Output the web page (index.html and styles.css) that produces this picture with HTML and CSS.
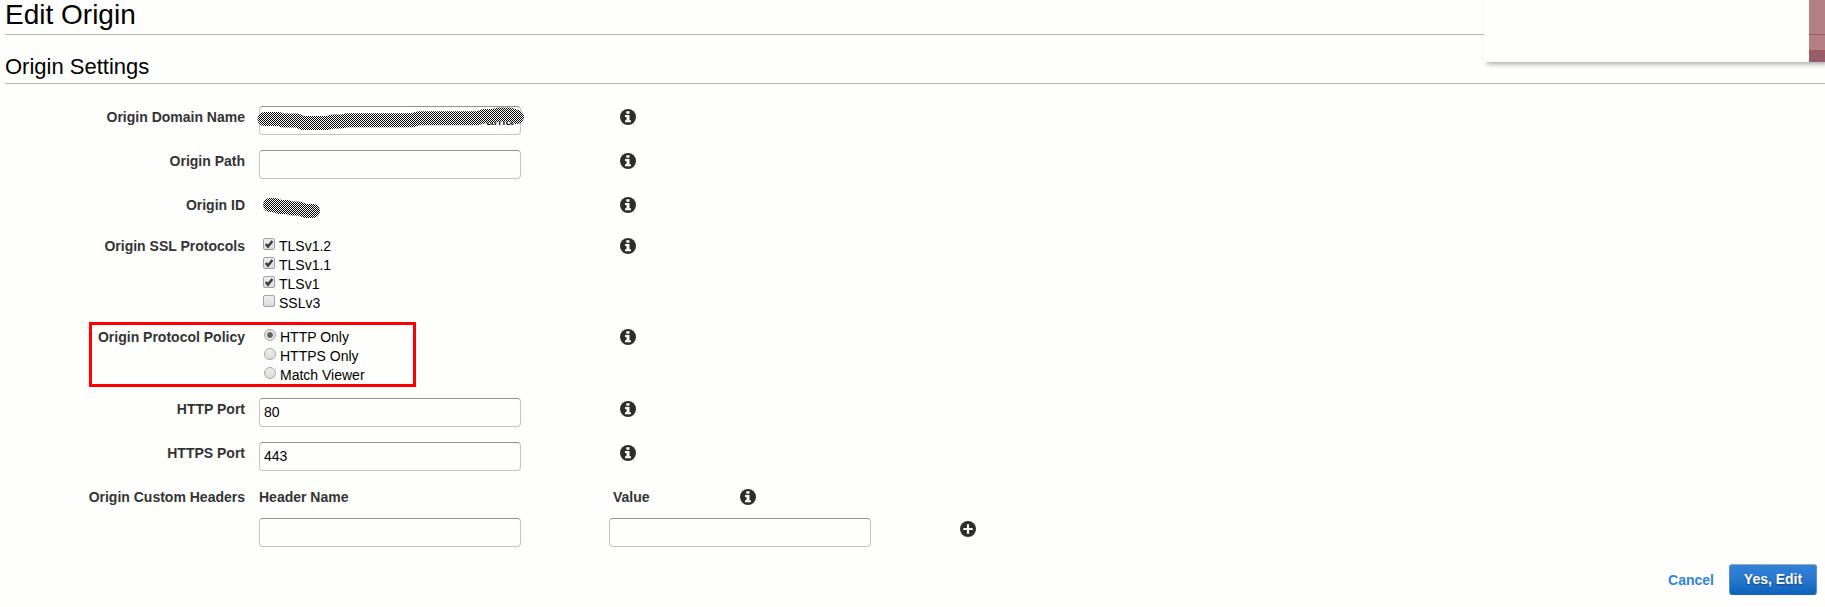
FILE: index.html
```
<!DOCTYPE html>
<html lang="en">
<head>
<meta charset="utf-8">
<title>Edit Origin</title>
<link rel="stylesheet" href="styles.css">
</head>
<body>
<svg class="defs" width="0" height="0" aria-hidden="true">
  <defs>
    <pattern id="hatch" width="2" height="2" patternUnits="userSpaceOnUse">
      <rect width="2" height="2" fill="#fefefd"/>
      <rect width="1" height="1" fill="#000"/>
      <rect x="1" y="1" width="1" height="1" fill="#000"/>
    </pattern>
    <symbol id="info" viewBox="0 0 16 16">
      <circle cx="8" cy="8" r="8" fill="#2d2d2d"/>
      <path d="M6.3 2.3h3.2v2.4H6.3zM5 6h4.5v5.3h1.4v2H5v-2h1.5V8H5z" fill="#fefefd"/>
    </symbol>
    <symbol id="plus" viewBox="0 0 16 16">
      <circle cx="8" cy="8" r="8" fill="#2d2d2d"/>
      <path d="M6.9 3.3h2.2v3.6h3.6v2.2H9.1v3.6H6.9V9.1H3.3V6.9h3.6z" fill="#fefefd"/>
    </symbol>
  </defs>
</svg>
<main class="page">
  <h1 class="title">Edit Origin</h1>
  <h2 class="subtitle">Origin Settings</h2>
  <form class="form">
    <div class="row">
      <span class="label">Origin Domain Name</span>
      <div class="field"><div class="input domain">ama</div>
        <svg class="scribble wide" width="270" height="26"><path d="M7.500 12H22L26 13.500H40L46 16H70L76 14.500H84L90 13.300H155L162 11.300H220L228 9H236L242 7.500H252L260 10"/></svg>
      </div>
      <svg class="icon"><use href="#info"/></svg>
    </div>
    <div class="row">
      <span class="label">Origin Path</span>
      <div class="field"><div class="input"></div></div>
      <svg class="icon"><use href="#info"/></svg>
    </div>
    <div class="row short">
      <span class="label">Origin ID</span>
      <div class="field">
        <svg class="scribble small" width="60" height="26"><path d="M8 8H12L18 10H25L30 11.500H37L44 14H51"/></svg>
      </div>
      <svg class="icon"><use href="#info"/></svg>
    </div>
    <div class="row protocols">
      <span class="label">Origin SSL Protocols</span>
      <div class="field options">
        <div class="option"><span class="box"><svg class="tick" viewBox="0 0 12 12"><path d="M2.800 6L5 8.500L9.400 3"/></svg></span>TLSv1.2</div>
        <div class="option"><span class="box"><svg class="tick" viewBox="0 0 12 12"><path d="M2.800 6L5 8.500L9.400 3"/></svg></span>TLSv1.1</div>
        <div class="option"><span class="box"><svg class="tick" viewBox="0 0 12 12"><path d="M2.800 6L5 8.500L9.400 3"/></svg></span>TLSv1</div>
        <div class="option"><span class="box"></span>SSLv3</div>
      </div>
      <svg class="icon"><use href="#info"/></svg>
    </div>
    <div class="row policy">
      <span class="label">Origin Protocol Policy</span>
      <div class="field options">
        <div class="option"><span class="radio on"></span>HTTP Only</div>
        <div class="option"><span class="radio"></span>HTTPS Only</div>
        <div class="option"><span class="radio"></span>Match Viewer</div>
      </div>
      <svg class="icon"><use href="#info"/></svg>
      <div class="highlight"></div>
    </div>
    <div class="row">
      <span class="label">HTTP Port</span>
      <div class="field"><div class="input">80</div></div>
      <svg class="icon"><use href="#info"/></svg>
    </div>
    <div class="row">
      <span class="label">HTTPS Port</span>
      <div class="field"><div class="input">443</div></div>
      <svg class="icon"><use href="#info"/></svg>
    </div>
    <div class="row headers">
      <span class="label">Origin Custom Headers</span>
      <span class="head">Header Name</span>
      <span class="head value">Value</span>
      <svg class="icon"><use href="#info"/></svg>
    </div>
    <div class="row pair">
      <div class="input"></div>
      <div class="input"></div>
      <svg class="icon"><use href="#plus"/></svg>
    </div>
  </form>
  <footer class="actions">
    <a class="cancel">Cancel</a>
    <button class="submit" type="button">Yes, Edit</button>
  </footer>
</main>
<div class="popup"><div class="strip"></div></div>
</body>
</html>
```
FILE: styles.css
```
* { box-sizing: border-box; }
body {
  margin: 0;
  background: #fefefd;
  color: #000;
  font: 14px/19px "Liberation Sans", Arial, sans-serif;
  overflow: hidden;
}
.defs { position: absolute; }
.page { height: 607px; padding-left: 5px; }
.title, .subtitle {
  margin: 0;
  border-bottom: 1px solid #b5b5b5;
  font-weight: normal;
}
.title { height: 35px; font-size: 28px; line-height: 30px; }
.subtitle { height: 49px; padding-top: 18px; font-size: 22px; line-height: 28px; }
.form { padding-top: 22px; }
.row { display: flex; height: 44px; position: relative; }
.short { height: 41px; }
.protocols { height: 91px; }
.policy { height: 72px; }
.headers { height: 32px; }
.label {
  width: 240px;
  margin-right: 14px;
  padding-top: 2px;
  text-align: right;
  font-weight: bold;
  color: #333;
}
.field { width: 361px; position: relative; }
.input {
  width: 262px;
  height: 29px;
  padding: 4px 4px 0;
  border: 1px solid #c4c4c4;
  border-top-color: #929292;
  border-radius: 4px;
}
.domain { padding-left: 226px; }
.icon { width: 16px; height: 16px; margin-top: 3px; }
.scribble {
  position: absolute;
  fill: none;
  stroke: url(#hatch);
  stroke-width: 14px;
  stroke-linecap: round;
  stroke-linejoin: round;
}
.wide { left: -2px; top: 1px; }
.small { left: 3px; top: 3px; }
.options { padding: 2px 0 0 4px; }
.option { display: flex; height: 19px; }
.box {
  width: 12px;
  height: 12px;
  margin: 1px 4px 0 0;
  border: 1px solid #a2a2a2;
  border-radius: 2px;
  background: linear-gradient(#eee, #dcdcdc);
}
.tick { display: block; width: 12px; height: 12px; margin: -1px; fill: none; stroke: #3c3c3c; stroke-width: 2.5; }
.radio {
  width: 12px;
  height: 12px;
  margin: 1px 4px 0 1px;
  border: 1px solid #a6a6a6;
  border-radius: 50%;
  background: linear-gradient(#eee, #dcdcdc);
}
.on { background: radial-gradient(circle, #606060 2.4px, #e5e5e5 3.3px); }
.highlight {
  position: absolute;
  left: 84px;
  top: -4px;
  width: 327px;
  height: 65px;
  border: 3px solid #f00;
}
.head { width: 354px; padding-top: 2px; font-weight: bold; color: #333; }
.value { width: 127px; }
.pair { padding-left: 254px; }
.pair .input { margin-right: 88px; }
.pair .icon { margin-left: 1px; }
.actions { display: flex; justify-content: flex-end; align-items: flex-start; padding: 2px 8px 0 0; }
.cancel { margin: 7px 15px 0 0; font-weight: bold; color: #2e84dc; }
.submit {
  width: 88px;
  height: 31px;
  padding: 0;
  border: 1px solid #1f64b4;
  border-color: #9dabba #5c8fc9 #1f64b4;
  border-radius: 3px;
  background: linear-gradient(#2f82d8, #2878ce 50%, #0c63bb);
  color: #fefefd;
  font: bold 14px/27px "Liberation Sans", Arial, sans-serif;
  text-shadow: 0 1px 2px #123f78;
}
.popup {
  position: absolute;
  left: 1484px;
  top: 0;
  width: 341px;
  height: 62px;
  background: #fefefd;
  box-shadow: 3px 2px 5px rgba(0, 0, 0, .35);
}
.strip {
  width: 16px;
  height: 62px;
  margin-left: auto;
  background: linear-gradient(#b48085 34px, #985c68 34px, #985c68 35px, #b48085 35px, #b48085 50px, #985c68 50px);
}
```
